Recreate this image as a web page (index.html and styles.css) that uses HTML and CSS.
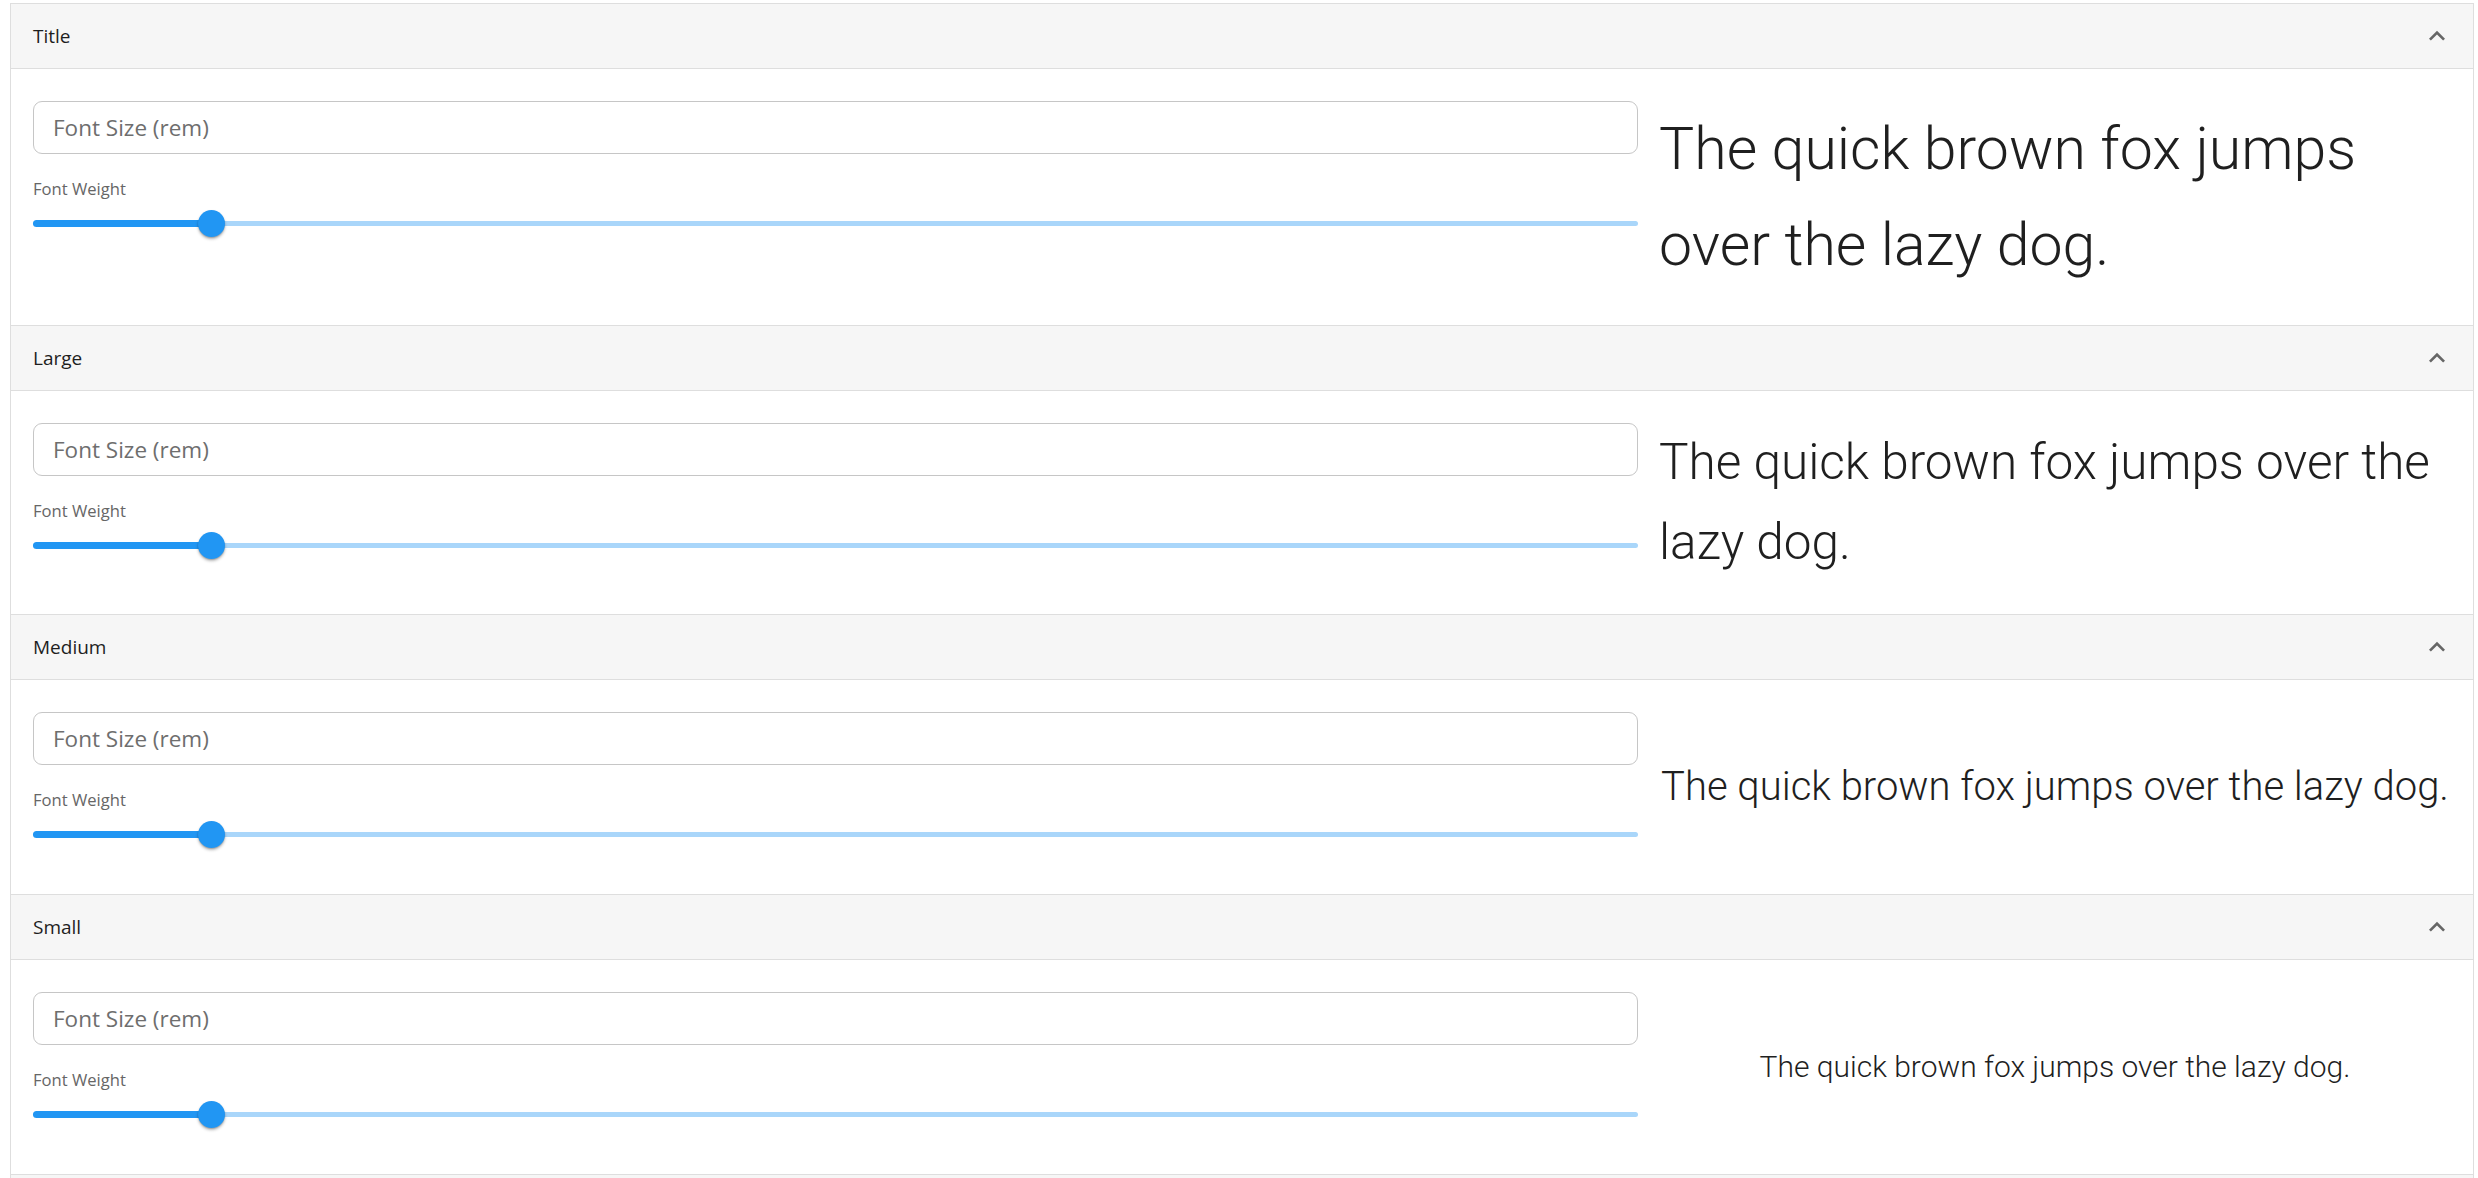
FILE: index.html
```html
<!DOCTYPE html>
<html lang="en">
<head>
<meta charset="utf-8">
<title>Typography settings</title>
<link rel="stylesheet" href="styles.css">
</head>
<body>
<div class="page">
  <div class="accordion">
    <section class="item">
      <div class="summary">
        <span class="summary-title">Title</span>
        <svg class="chev" viewBox="0 0 24 24"><path d="M12 8l-6 6 1.41 1.41L12 10.83l4.59 4.58L18 14z"/></svg>
      </div>
      <div class="details">
        <div class="controls">
          <input class="field" type="text" placeholder="Font Size (rem)">
          <div class="label">Font Weight</div>
          <div class="slider">
            <div class="rail"></div>
            <div class="track" style="width:11.1%"></div>
            <div class="thumb" style="left:11.1%"></div>
          </div>
        </div>
        <div class="preview"><p class="sample sample-title">The quick brown fox jumps over the lazy dog.</p></div>
      </div>
    </section>
    <section class="item">
      <div class="summary">
        <span class="summary-title">Large</span>
        <svg class="chev" viewBox="0 0 24 24"><path d="M12 8l-6 6 1.41 1.41L12 10.83l4.59 4.58L18 14z"/></svg>
      </div>
      <div class="details">
        <div class="controls">
          <input class="field" type="text" placeholder="Font Size (rem)">
          <div class="label">Font Weight</div>
          <div class="slider">
            <div class="rail"></div>
            <div class="track" style="width:11.1%"></div>
            <div class="thumb" style="left:11.1%"></div>
          </div>
        </div>
        <div class="preview"><p class="sample sample-large">The quick brown fox jumps over the lazy dog.</p></div>
      </div>
    </section>
    <section class="item">
      <div class="summary">
        <span class="summary-title">Medium</span>
        <svg class="chev" viewBox="0 0 24 24"><path d="M12 8l-6 6 1.41 1.41L12 10.83l4.59 4.58L18 14z"/></svg>
      </div>
      <div class="details">
        <div class="controls">
          <input class="field" type="text" placeholder="Font Size (rem)">
          <div class="label">Font Weight</div>
          <div class="slider">
            <div class="rail"></div>
            <div class="track" style="width:11.1%"></div>
            <div class="thumb" style="left:11.1%"></div>
          </div>
        </div>
        <div class="preview"><p class="sample sample-medium">The quick brown fox jumps over the lazy dog.</p></div>
      </div>
    </section>
    <section class="item">
      <div class="summary">
        <span class="summary-title">Small</span>
        <svg class="chev" viewBox="0 0 24 24"><path d="M12 8l-6 6 1.41 1.41L12 10.83l4.59 4.58L18 14z"/></svg>
      </div>
      <div class="details">
        <div class="controls">
          <input class="field" type="text" placeholder="Font Size (rem)">
          <div class="label">Font Weight</div>
          <div class="slider">
            <div class="rail"></div>
            <div class="track" style="width:11.1%"></div>
            <div class="thumb" style="left:11.1%"></div>
          </div>
        </div>
        <div class="preview"><p class="sample sample-small">The quick brown fox jumps over the lazy dog.</p></div>
      </div>
    </section>
    <div class="summary-peek"></div>
  </div>
</div>
</body>
</html>
```

FILE: styles.css
```css
html, body {
  margin: 0;
  height: 100%;
  overflow: hidden;
  background: #ffffff;
}

.page {
  padding: 3px 4px 0 10px;
  font-family: "Open Sans", "DejaVu Sans", sans-serif;
}

.accordion {
  border: 1px solid #dedede;
  border-bottom: none;
}

.summary {
  height: 64px;
  display: flex;
  align-items: center;
  justify-content: space-between;
  padding: 0 20px 0 22px;
  background: #f6f6f6;
  border-bottom: 1px solid #dedede;
}

.summary-peek {
  height: 3px;
  background: #f6f6f6;
}

.summary-title {
  font-size: 19px;
  color: #1e1e1e;
}

.chev {
  width: 32px;
  height: 32px;
  fill: #666666;
}

.details {
  display: grid;
  grid-template-columns: 1605px 1fr;
  column-gap: 21px;
  padding: 32px 22px;
  border-bottom: 1px solid #dedede;
}

.controls {
  display: flex;
  flex-direction: column;
  align-self: start;
  padding-bottom: 14px;
}

.field {
  box-sizing: border-box;
  width: 100%;
  height: 53px;
  margin: 0;
  padding: 0 19px;
  border: 1px solid #c6c6c6;
  border-radius: 9px;
  font-family: "Open Sans", "DejaVu Sans", sans-serif;
  font-size: 22.5px;
  color: #333;
  background: #fff;
  outline: none;
}

.field::placeholder {
  color: #6e6e6e;
  opacity: 1;
}

.label {
  margin-top: 23px;
  font-size: 16.6px;
  line-height: 24px;
  color: #666666;
}

.slider {
  position: relative;
  height: 28px;
  margin-top: 8px;
}

.rail {
  position: absolute;
  left: 0;
  right: 0;
  top: 11.5px;
  height: 5px;
  border-radius: 3px;
  background: #a9d6fa;
}

.track {
  position: absolute;
  left: 0;
  top: 10.5px;
  height: 7px;
  border-radius: 4px;
  background: #2196f3;
}

.thumb {
  position: absolute;
  top: 0.5px;
  width: 27px;
  height: 27px;
  margin-left: -13.5px;
  border-radius: 50%;
  background: #2196f3;
  box-shadow: 0 2px 3px rgba(0, 0, 0, 0.28), 0 1px 1px rgba(0, 0, 0, 0.14);
}

.preview {
  display: flex;
  align-items: center;
  justify-content: center;
}

.sample {
  margin: 0;
  font-family: Roboto, "Liberation Sans", sans-serif;
  font-weight: 300;
  color: #1f1f1f;
}

.sample-title {
  font-size: 59px;
  line-height: 96px;
}

.sample-large {
  font-size: 49.5px;
  line-height: 79.5px;
}

.sample-medium {
  font-size: 40px;
  line-height: 64px;
}

.sample-small {
  font-size: 30px;
  line-height: 48px;
}
```
